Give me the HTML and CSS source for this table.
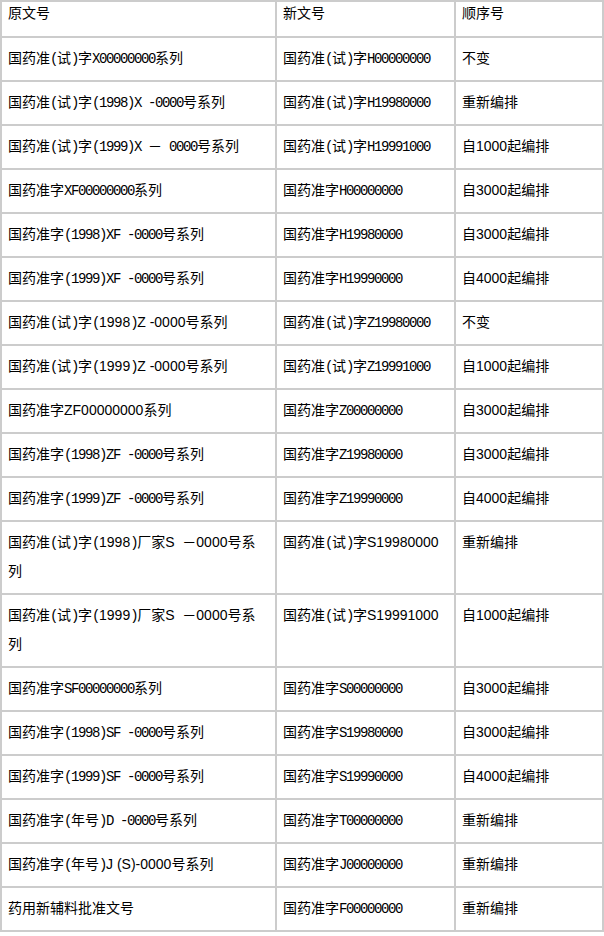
FILE: index.html
```html
<!DOCTYPE html>
<html lang="zh-CN">
<head>
<meta charset="utf-8">
<title>文号对照表</title>
<link rel="stylesheet" href="styles.css">
</head>
<body>
<table class="tbl">
  <thead>
    <tr><th class="c1">原文号</th><th class="c2">新文号</th><th class="c3">顺序号</th></tr>
  </thead>
  <tbody>
    <tr><td class="c1">国药准<span class="m">(</span>试<span class="m">)</span>字<span class="m">X00000000</span>系列</td><td>国药准<span class="m">(</span>试<span class="m">)</span>字<span class="m">H00000000</span></td><td>不变</td></tr>
    <tr><td class="c1">国药准<span class="m">(</span>试<span class="m">)</span>字<span class="m">(1998)X -0000</span>号系列</td><td>国药准<span class="m">(</span>试<span class="m">)</span>字<span class="m">H19980000</span></td><td>重新编排</td></tr>
    <tr><td class="c1">国药准<span class="m">(</span>试<span class="m">)</span>字<span class="m">(1999)X </span>－<span class="m"> 0000</span>号系列</td><td>国药准<span class="m">(</span>试<span class="m">)</span>字<span class="m">H19991000</span></td><td>自1000起编排</td></tr>
    <tr><td class="c1">国药准字<span class="m">XF00000000</span>系列</td><td>国药准字<span class="m">H00000000</span></td><td>自3000起编排</td></tr>
    <tr><td class="c1">国药准字<span class="m">(1998)XF -0000</span>号系列</td><td>国药准字<span class="m">H19980000</span></td><td>自3000起编排</td></tr>
    <tr><td class="c1">国药准字<span class="m">(1999)XF -0000</span>号系列</td><td>国药准字<span class="m">H19990000</span></td><td>自4000起编排</td></tr>
    <tr><td class="c1">国药准<span class="m">(</span>试<span class="m">)</span>字<span class="m">(</span>1998<span class="m">)</span>Z -0000号系列</td><td>国药准<span class="m">(</span>试<span class="m">)</span>字<span class="m">Z19980000</span></td><td>不变</td></tr>
    <tr><td class="c1">国药准<span class="m">(</span>试<span class="m">)</span>字<span class="m">(</span>1999<span class="m">)</span>Z -0000号系列</td><td>国药准<span class="m">(</span>试<span class="m">)</span>字<span class="m">Z19991000</span></td><td>自1000起编排</td></tr>
    <tr><td class="c1">国药准字ZF00000000系列</td><td>国药准字<span class="m">Z00000000</span></td><td>自3000起编排</td></tr>
    <tr><td class="c1">国药准字<span class="m">(1998)ZF -0000</span>号系列</td><td>国药准字<span class="m">Z19980000</span></td><td>自3000起编排</td></tr>
    <tr><td class="c1">国药准字<span class="m">(1999)ZF -0000</span>号系列</td><td>国药准字<span class="m">Z19990000</span></td><td>自4000起编排</td></tr>
    <tr><td class="c1">国药准<span class="m">(</span>试<span class="m">)</span>字<span class="m">(</span>1998<span class="m">)</span>厂家S&nbsp; －0000号系列</td><td>国药准<span class="m">(</span>试<span class="m">)</span>字S19980000</td><td>重新编排</td></tr>
    <tr><td class="c1">国药准<span class="m">(</span>试<span class="m">)</span>字<span class="m">(</span>1999<span class="m">)</span>厂家S&nbsp; －0000号系列</td><td>国药准<span class="m">(</span>试<span class="m">)</span>字S19991000</td><td>自1000起编排</td></tr>
    <tr><td class="c1">国药准字<span class="m">SF00000000</span>系列</td><td>国药准字<span class="m">S00000000</span></td><td>自3000起编排</td></tr>
    <tr><td class="c1">国药准字<span class="m">(1998)SF -0000</span>号系列</td><td>国药准字<span class="m">S19980000</span></td><td>自3000起编排</td></tr>
    <tr><td class="c1">国药准字<span class="m">(1999)SF -0000</span>号系列</td><td>国药准字<span class="m">S19990000</span></td><td>自4000起编排</td></tr>
    <tr><td class="c1">国药准字<span class="m">(</span>年号<span class="m">)D -0000</span>号系列</td><td>国药准字<span class="m">T00000000</span></td><td>重新编排</td></tr>
    <tr><td class="c1">国药准字<span class="m">(</span>年号<span class="m">)</span>J (S)-0000号系列</td><td>国药准字<span class="m">J00000000</span></td><td>重新编排</td></tr>
    <tr><td class="c1">药用新辅料批准文号</td><td>国药准字<span class="m">F00000000</span></td><td>重新编排</td></tr>
  </tbody>
</table>
</body>
</html>
```

FILE: styles.css
```css
html, body {
  margin: 0;
  padding: 0;
  background: #fff;
}

.tbl {
  border-collapse: separate;
  border-spacing: 0;
  border: 1px solid #cccccc;
  width: 604px;
  table-layout: fixed;
  font-family: "Liberation Sans", "Noto Sans CJK SC", sans-serif;
  font-size: 14px;
  line-height: 29px;
  color: #000;
}

.tbl th,
.tbl td {
  box-sizing: border-box;
  border: 1px solid #cccccc;
  padding: 6px 6px 7px 6px;
  vertical-align: top;
  text-align: left;
  font-weight: normal;
}

.tbl th {
  padding: 0 6px 11px 6px;
  line-height: 23px;
}

.tbl th.c1 { width: 275px; }
.tbl th.c2 { width: 179px; }
.tbl th.c3 { width: 148px; }

.tbl td.c1 {
  padding-right: 10px;
}

.m {
  font-family: "Liberation Mono", monospace;
  font-size: 14px;
  letter-spacing: -1.4px;
  line-height: 1;
}
```
